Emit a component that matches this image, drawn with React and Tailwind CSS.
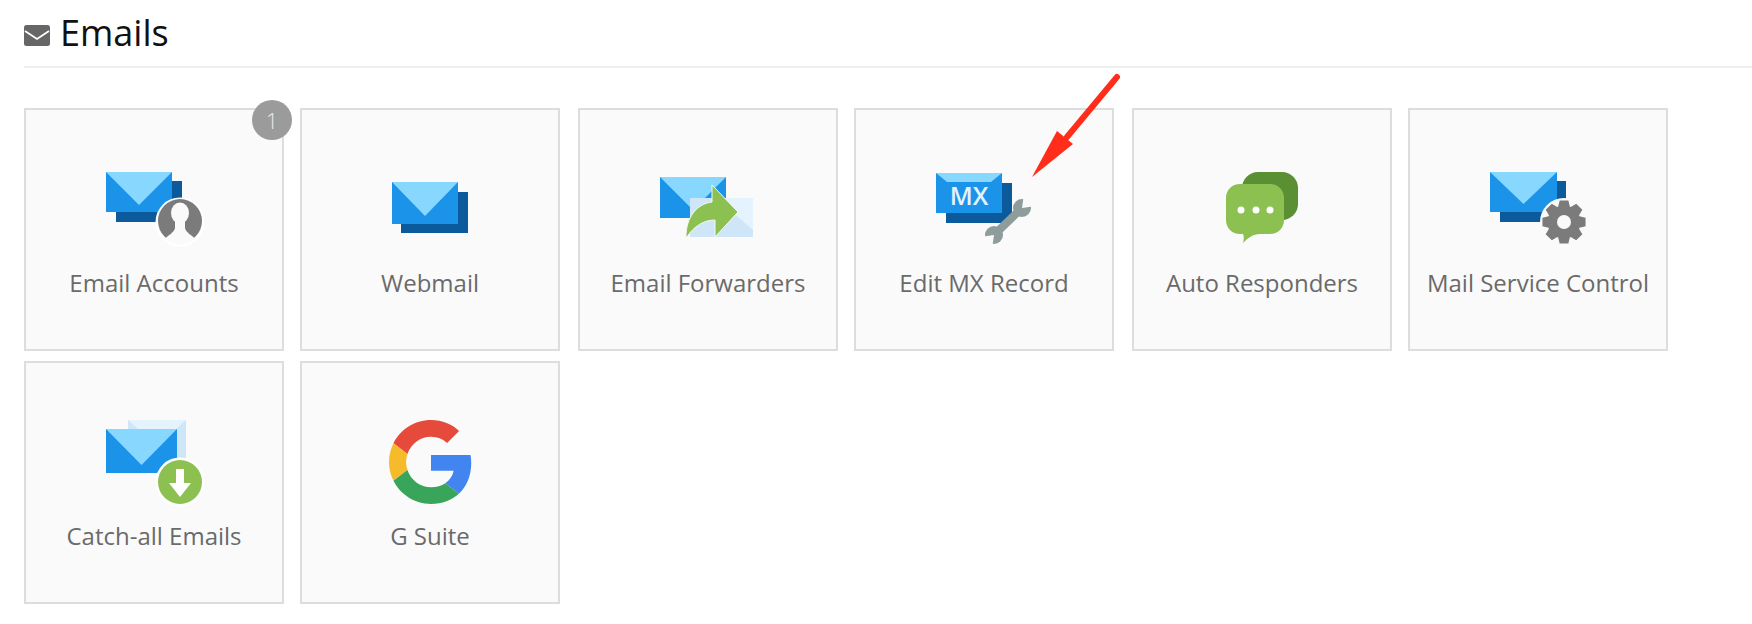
import React from 'react';

const Envelope = ({ x, y, w, h, vy, backX, backY, backW, backH }) => (
  <g>
    <rect x={backX} y={backY} width={backW} height={backH} fill="#0b5a9c" />
    <rect x={x} y={y} width={w} height={h} fill="#1b93e8" />
    <path d={`M${x} ${y}H${x + w}L${x + w / 2} ${vy}Z`} fill="#87d7fe" />
  </g>
);

// builds the cog outline, 8 teeth
const gearPath = (cx, cy, outer, inner) => {
  let d = '';
  for (let i = 0; i < 8; i++) {
    const a = (i * Math.PI) / 4 - Math.PI / 2;
    const pts = [
      [inner, a - 0.36],
      [outer, a - 0.2],
      [outer, a + 0.2],
      [inner, a + 0.36],
    ];
    pts.forEach(([r, t], j) => {
      const px = (cx + r * Math.cos(t)).toFixed(2);
      const py = (cy + r * Math.sin(t)).toFixed(2);
      d += `${i === 0 && j === 0 ? 'M' : 'L'}${px} ${py}`;
    });
  }
  return d + 'Z';
};

const IconBox = ({ children }) => (
  <svg width="120" height="80" viewBox="0 0 120 80" className="overflow-visible shrink-0">
    {children}
  </svg>
);

const AccountsIcon = () => (
  <IconBox>
    <Envelope x={12} y={4} w={66} h={40} vy={37} backX={22} backY={13} backW={66} backH={41} />
    <circle cx="86" cy="54" r="24.5" fill="#fff" />
    <circle cx="86" cy="53" r="22" fill="#7b7b7b" />
    <ellipse cx="86" cy="45" rx="9" ry="10.5" fill="#fafafa" />
    <path d="M81 50V60C80 65 74 67 71 71Q86 82 101 71C98 67 92 65 91 60V50Z" fill="#fafafa" />
  </IconBox>
);

const WebmailIcon = () => (
  <IconBox>
    <Envelope x={22} y={14} w={66} h={42} vy={48} backX={31} backY={24} backW={67} backH={41} />
  </IconBox>
);

const ForwardersIcon = () => (
  <IconBox>
    <rect x="12" y="9" width="66" height="41" fill="#1b93e8" />
    <path d="M12 9H78L45 42Z" fill="#87d7fe" />
    <rect x="42" y="30" width="63" height="39" fill="#cfe6f8" />
    <path d="M68 30H105V62Z" fill="#e4f3fd" />
    <path
      d="M64 17L90 44L67 69V52C56 52 46 58 39 69H38C38 50 48 36 64 34Z"
      fill="#8cc152"
      stroke="#f4f8f2"
      strokeWidth="1"
      strokeLinejoin="miter"
    />
  </IconBox>
);

const MxIcon = () => (
  <IconBox>
    <rect x="22" y="15" width="66" height="40" fill="#0b5a9c" />
    <rect x="12" y="5" width="66" height="40" fill="#1b93e8" />
    <path d="M12 5H78L67 14H23Z" fill="#87d7fe" />
    <text
      x="45"
      y="37"
      textAnchor="middle"
      fill="#e3f3fd"
      fontSize="25"
      fontWeight="600"
      fontFamily="'Open Sans', sans-serif"
    >
      MX
    </text>
    <path d="M60 78L108 30L112 50L72 84Z" fill="#fafafa" />
    <path d="M71 66L97 41" stroke="#8e9c9c" strokeWidth="8" />
    <circle cx="98" cy="40" r="9" fill="#8e9c9c" />
    <circle cx="70" cy="67" r="9" fill="#8e9c9c" />
    <path d="M98 40L100 26L112 38Z" fill="#fafafa" />
    <path d="M70 67L68 81L56 69Z" fill="#fafafa" />
  </IconBox>
);

const ResponderIcon = () => (
  <IconBox>
    <rect x="40" y="4" width="56" height="48" rx="16" fill="#5a8f33" />
    <path d="M41 75C42 71 42 68 41 66H38C30 66 24 60 24 52V30C24 22 30 16 38 16H68C76 16 82 22 82 30V52C82 60 76 66 68 66H58C51 66 46 70 41 75Z" fill="#8cc152" />
    <circle cx="39" cy="42" r="3.5" fill="#fff" />
    <circle cx="54" cy="42" r="3.5" fill="#fff" />
    <circle cx="68" cy="42" r="3.5" fill="#fff" />
  </IconBox>
);

const ServiceIcon = () => (
  <IconBox>
    <Envelope x={12} y={4} w={67} h={40} vy={36} backX={22} backY={13} backW={66} backH={41} />
    <circle cx="86" cy="54" r="24" fill="#fafafa" />
    <path d={gearPath(86, 54, 22, 16.5)} fill="#7b7b7b" />
    <circle cx="86" cy="54" r="7" fill="#fafafa" />
  </IconBox>
);

const CatchAllIcon = () => (
  <IconBox>
    <rect x="34" y="-1" width="58" height="44" fill="#cfe6f8" />
    <path d="M34 -1H92L63 25Z" fill="#e4f3fd" />
    <rect x="12" y="8" width="71" height="44" fill="#1b93e8" />
    <path d="M12 8H83L47.5 44Z" fill="#87d7fe" />
    <circle cx="86" cy="61" r="24.5" fill="#fff" />
    <circle cx="86" cy="61" r="22" fill="#8cc152" />
    <path d="M82 48H90V62H97L86 76L75 62H82Z" fill="#fff" />
  </IconBox>
);

const GSuiteIcon = () => (
  <IconBox>
    <g transform="translate(19,-1) scale(1.75)">
      <path fill="#e64a3b" d="M24 9.5c3.54 0 6.71 1.22 9.21 3.6l6.85-6.85C35.9 2.38 30.47 0 24 0 14.62 0 6.51 5.38 2.56 13.22l7.98 6.19C12.43 13.72 17.74 9.5 24 9.5z" />
      <path fill="#4285f0" d="M46.98 24.55c0-1.57-.15-3.09-.38-4.55H24v9.02h12.94c-.58 2.96-2.26 5.48-4.78 7.18l7.73 6c4.51-4.18 7.09-10.36 7.09-17.65z" />
      <path fill="#f6bb2a" d="M10.53 28.59c-.48-1.45-.76-2.99-.76-4.59s.27-3.14.76-4.59l-7.98-6.19C.92 16.46 0 20.12 0 24c0 3.88.92 7.54 2.56 10.78l7.97-6.19z" />
      <path fill="#38a55a" d="M24 48c6.48 0 11.93-2.13 15.89-5.81l-7.73-6c-2.15 1.45-4.92 2.3-8.16 2.3-6.26 0-11.57-4.22-13.47-9.91l-7.98 6.19C6.51 42.62 14.62 48 24 48z" />
    </g>
  </IconBox>
);

const items = [
  { label: 'Email Accounts', Icon: AccountsIcon, badge: 1 },
  { label: 'Webmail', Icon: WebmailIcon },
  { label: 'Email Forwarders', Icon: ForwardersIcon },
  { label: 'Edit MX Record', Icon: MxIcon },
  { label: 'Auto Responders', Icon: ResponderIcon },
  { label: 'Mail Service Control', Icon: ServiceIcon },
  { label: 'Catch-all Emails', Icon: CatchAllIcon },
  { label: 'G Suite', Icon: GSuiteIcon },
];

const Card = ({ label, Icon, badge }) => (
  <div className="relative w-[260px] h-[243px] odd:ml-[2px] border-2 border-[#dddddd] bg-[#fafafa] flex flex-col items-center pt-[58px]">
    {badge && (
      <span className="absolute -top-[10px] -right-[10px] w-10 h-10 rounded-full bg-[#9b9b9b] text-[#e8e8e8] text-[22px] font-light flex items-center justify-center">
        {badge}
      </span>
    )}
    <Icon />
    <div className="mt-[23px] text-[24px] leading-6 font-normal text-[#6a6a6a] whitespace-nowrap">{label}</div>
  </div>
);

export default function App() {
  return (
    <div className="relative h-[624px] w-full overflow-hidden bg-white pl-6 font-['Open_Sans',sans-serif]">
      {/* Heading */}
      <div className="h-[68px] border-b-2 border-[#eeeeee] flex items-start pt-[9px] gap-[10px]">
        <svg width="26" height="21" viewBox="0 0 26 21" className="mt-[16px] shrink-0">
          <rect width="26" height="21" rx="2.5" fill="#666666" />
          <path d="M1 6L13 14L25 6" fill="none" stroke="#fff" strokeWidth="1.8" />
        </svg>
        <h1 className="text-[36px] leading-[48px] font-normal text-[#111111]">Emails</h1>
      </div>

      {/* Tiles */}
      <div className="mt-10 -ml-[2px] w-[1650px] flex flex-wrap gap-x-4 gap-y-[10px]">
        {items.map((item) => (
          <Card key={item.label} {...item} />
        ))}
      </div>

      {/* Annotation arrow */}
      <svg width="110" height="120" viewBox="0 0 110 120" className="absolute left-[1020px] top-[70px]">
        <path d="M97 7L47 67" stroke="#ff2d1a" strokeWidth="6" strokeLinecap="round" />
        <path d="M12 107L37 61L53 74Z" fill="#ff2d1a" />
      </svg>
    </div>
  );
}
